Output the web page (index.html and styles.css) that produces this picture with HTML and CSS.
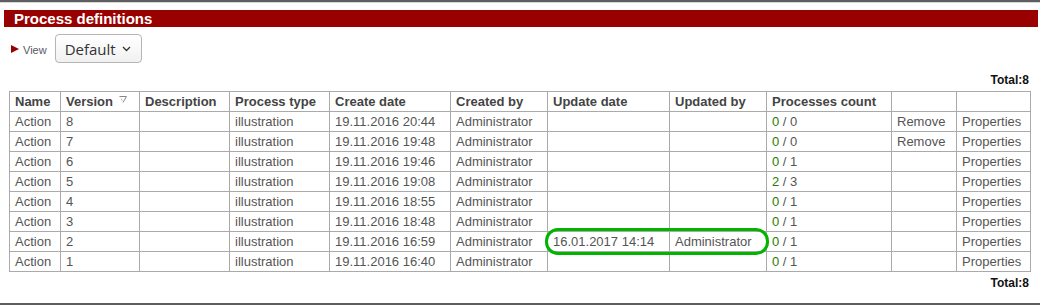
FILE: index.html
```html
<!DOCTYPE html>
<html>
<head>
<meta charset="utf-8">
<title>Process definitions</title>
<link rel="stylesheet" href="styles.css">
</head>
<body>
<div class="rule-top"></div>
<div class="title-bar">Process definitions</div>
<div class="view-row">
  <span class="view-arrow"></span>
  <span class="view-label">View</span>
  <button class="view-select">Default
    <svg class="chev" width="9" height="6" viewBox="0 0 9 6"><path d="M1 1 L4.5 4.5 L8 1" fill="none" stroke="#333" stroke-width="1.3"/></svg>
  </button>
</div>
<div class="total total-top">Total:8</div>
<div class="table-wrap">
<table class="grid">
  <colgroup>
    <col style="width:51px"><col style="width:79px"><col style="width:90px"><col style="width:100px"><col style="width:121px"><col style="width:97px"><col style="width:122px"><col style="width:97px"><col style="width:125px"><col style="width:65px"><col style="width:74px">
  </colgroup>
  <thead>
    <tr>
      <th>Name</th>
      <th>Version <svg class="sort" width="8" height="7" viewBox="0 0 8 7"><path d="M0.5 0.5 H7.5 L4 6.5" fill="none" stroke="#888" stroke-width="1"/><path d="M2 2.5 L3.5 5" stroke="#bbb" stroke-width="1"/></svg></th>
      <th>Description</th>
      <th>Process type</th>
      <th>Create date</th>
      <th>Created by</th>
      <th>Update date</th>
      <th>Updated by</th>
      <th>Processes count</th>
      <th></th>
      <th></th>
    </tr>
  </thead>
  <tbody>
    <tr><td>Action</td><td>8</td><td></td><td>illustration</td><td>19.11.2016 20:44</td><td>Administrator</td><td></td><td></td><td><span class="ok">0</span> / 0</td><td>Remove</td><td>Properties</td></tr>
    <tr><td>Action</td><td>7</td><td></td><td>illustration</td><td>19.11.2016 19:48</td><td>Administrator</td><td></td><td></td><td><span class="ok">0</span> / 0</td><td>Remove</td><td>Properties</td></tr>
    <tr><td>Action</td><td>6</td><td></td><td>illustration</td><td>19.11.2016 19:46</td><td>Administrator</td><td></td><td></td><td><span class="ok">0</span> / 1</td><td></td><td>Properties</td></tr>
    <tr><td>Action</td><td>5</td><td></td><td>illustration</td><td>19.11.2016 19:08</td><td>Administrator</td><td></td><td></td><td><span class="ok">2</span> / 3</td><td></td><td>Properties</td></tr>
    <tr><td>Action</td><td>4</td><td></td><td>illustration</td><td>19.11.2016 18:55</td><td>Administrator</td><td></td><td></td><td><span class="ok">0</span> / 1</td><td></td><td>Properties</td></tr>
    <tr><td>Action</td><td>3</td><td></td><td>illustration</td><td>19.11.2016 18:48</td><td>Administrator</td><td></td><td></td><td><span class="ok">0</span> / 1</td><td></td><td>Properties</td></tr>
    <tr><td>Action</td><td>2</td><td></td><td>illustration</td><td>19.11.2016 16:59</td><td>Administrator</td><td>16.01.2017 14:14</td><td>Administrator</td><td><span class="ok">0</span> / 1</td><td></td><td>Properties</td></tr>
    <tr><td>Action</td><td>1</td><td></td><td>illustration</td><td>19.11.2016 16:40</td><td>Administrator</td><td></td><td></td><td><span class="ok">0</span> / 1</td><td></td><td>Properties</td></tr>
  </tbody>
</table>
<div class="highlight"></div>
</div>
<div class="total total-bottom">Total:8</div>
<div class="rule-bottom"></div>
</body>
</html>
```

FILE: styles.css
```css
html, body {
  margin: 0;
  padding: 0;
  background: #fff;
  font-family: "Liberation Sans", Arial, sans-serif;
}

.rule-top {
  width: 1040px;
  height: 0;
  border-top: 2px solid #5e5e5e;
  border-bottom: 1px solid #d8d8d8;
}

.title-bar {
  margin: 7px 0 0 4px;
  width: 1024px;
  height: 17px;
  padding-left: 10px;
  background: #990000;
  color: #fff;
  font-weight: bold;
  font-size: 15px;
  line-height: 17px;
}

.view-row {
  display: flex;
  align-items: center;
  margin-top: 7px;
  padding-left: 11px;
  height: 29px;
}

.view-arrow {
  width: 0;
  height: 0;
  border-top: 4px solid transparent;
  border-bottom: 4px solid transparent;
  border-left: 8px solid #990000;
  margin-top: 1px;
}

.view-label {
  margin-left: 4px;
  font-size: 11px;
  color: #555a66;
  margin-top: 2px;
}

.view-select {
  margin-left: 8px;
  width: 87px;
  height: 29px;
  box-sizing: border-box;
  border: 1px solid #b5b5b5;
  border-radius: 4px;
  background: linear-gradient(#ffffff, #f1f1f1);
  font-family: "Open Sans", "DejaVu Sans", sans-serif;
  font-size: 15px;
  color: #333;
  display: flex;
  align-items: center;
  padding: 0 0 0 9px;
  gap: 6px;
}

.chev {
  display: block;
  margin-top: 1px;
}

.total {
  width: 1029px;
  text-align: right;
  font-weight: bold;
  font-size: 12px;
  line-height: 14px;
  color: #111;
}

.total-top {
  margin-top: 10px;
  margin-bottom: 4px;
}

.total-bottom {
  margin-top: 4px;
}

.table-wrap {
  position: relative;
  margin-left: 9px;
  width: 1022px;
}

.grid {
  border-collapse: collapse;
  table-layout: fixed;
  width: 1022px;
  font-size: 13px;
  color: #555;
}

.grid th, .grid td {
  border: 1px solid #aaaaaa;
  padding: 2px 5px;
  line-height: 15px;
  height: 15px;
  text-align: left;
  white-space: nowrap;
  overflow: hidden;
}

.grid th {
  font-weight: bold;
  color: #444;
}

.sort {
  margin-left: 2px;
  vertical-align: 3px;
}

.ok {
  color: #2b7c00;
}

.highlight {
  position: absolute;
  left: 536px;
  top: 137px;
  width: 218px;
  height: 21px;
  border: 3px solid #00b400;
  border-radius: 13px;
  pointer-events: none;
}

.rule-bottom {
  margin-top: 13px;
  width: 1040px;
  height: 0;
  border-top: 2px solid #5e5e5e;
}
```
